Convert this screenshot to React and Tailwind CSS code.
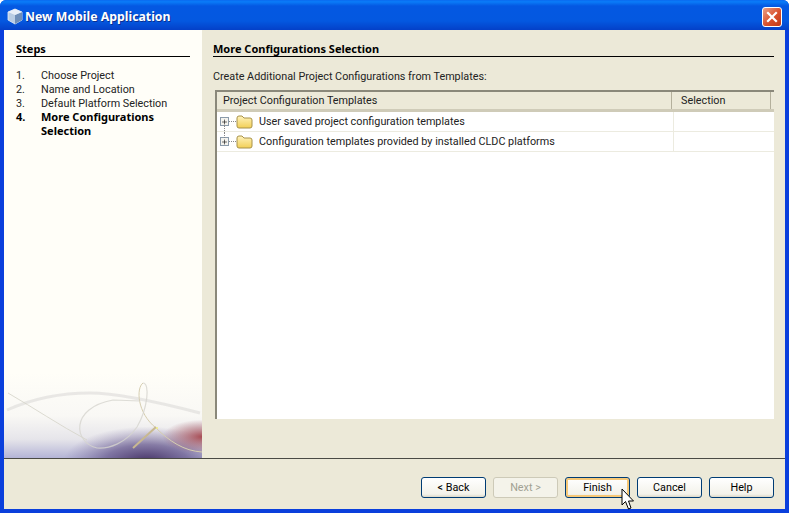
import { Plus } from "lucide-react";

const FONT = "font-['Roboto','Noto_Sans',sans-serif]";
const BOLD = "font-['Noto_Sans',sans-serif] text-[11px] font-bold text-black";

const steps = [
  { n: "1.", label: "Choose Project" },
  { n: "2.", label: "Name and Location" },
  { n: "3.", label: "Default Platform Selection" },
  { n: "4.", label: "More Configurations Selection", active: true },
];

const rows = [
  "User saved project configuration templates",
  "Configuration templates provided by installed CLDC platforms",
];

function CubeIcon() {
  return (
    <svg width="16" height="17" viewBox="0 0 16 17">
      <path d="M8 1 L15 4 V12 L8 16 L1 12 V4 Z" fill="#b9cde4" stroke="#e6eef8" strokeWidth="0.8" />
      <path d="M8 7 L15 4 V12 L8 16 Z" fill="#6f8fb8" />
      <path d="M8 7 L1 4 L8 1 L15 4 Z" fill="#e8eff8" />
    </svg>
  );
}

function CloseButton() {
  return (
    <div className="flex h-[20px] w-[20px] items-center justify-center rounded-[3px] border border-white bg-[linear-gradient(135deg,#e9a088,#d9502c_55%,#c03a18)]">
      <svg width="12" height="12" viewBox="0 0 12 12">
        <path d="M2 2 L10 10 M10 2 L2 10" stroke="white" strokeWidth="2.2" strokeLinecap="square" />
      </svg>
    </div>
  );
}

function Folder() {
  return (
    <svg width="17" height="14" viewBox="0 0 17 14">
      <defs>
        <linearGradient id="folder" x1="0" y1="0" x2="0" y2="1">
          <stop offset="0" stopColor="#fff3bd" />
          <stop offset="1" stopColor="#f2cf55" />
        </linearGradient>
      </defs>
      <path d="M1 3 Q1 1 3 1 H6 L8 3 H14 Q16 3 16 5 V11 Q16 13 14 13 H3 Q1 13 1 11 Z" fill="url(#folder)" stroke="#a8924a" />
    </svg>
  );
}

function TreeRow({ label, first, last }) {
  return (
    <div className="flex h-[20px] border-b border-[#ecebe0]">
      <div className="relative flex w-[457px] items-center border-r border-[#ecebe0]">
        {!first && <span className="absolute left-[7px] top-0 h-[6px] border-l border-dotted border-[#888]" />}
        {!last && <span className="absolute bottom-0 left-[7px] h-[6px] border-l border-dotted border-[#888]" />}
        <span className="ml-[3px] flex h-[9px] w-[9px] items-center justify-center border border-[#8a9aaa] bg-[#f4f3ee]">
          <Plus size={8} strokeWidth={2} className="text-black" />
        </span>
        <span className="w-[7px] border-t border-dotted border-[#888]" />
        <Folder />
        <span className="ml-[6px] text-[#222]">{label}</span>
      </div>
    </div>
  );
}

function WizardButton({ children, disabled, focused, className }) {
  return (
    <button
      disabled={disabled}
      className={`flex h-[21px] items-center justify-center rounded-[3px] border ${
        disabled
          ? "border-[#cdcab8] bg-[#f4f3ea] text-[#a1a192]"
          : "border-[#003c74] bg-[linear-gradient(#ffffff,#f3f2ea_85%,#dcd8c8)] text-black"
      } ${focused ? "shadow-[inset_0_0_0_2px_#f6c877]" : ""} ${className}`}
    >
      {children}
    </button>
  );
}

function Cursor() {
  return (
    <svg className="absolute left-[621px] top-[488px]" width="15" height="23" viewBox="0 0 15 23">
      <path d="M1 1 V17 L4.5 13.5 L7.5 21 L10 20 L7.5 13 H12.5 Z" fill="white" stroke="black" strokeWidth="1" />
    </svg>
  );
}

function Swoosh() {
  return (
    <svg className="absolute bottom-0 left-0" width="198" height="85" viewBox="0 0 198 85">
      <defs>
        <linearGradient id="fade" x1="0" y1="0" x2="0" y2="1">
          <stop offset="0" stopColor="#fffef8" />
          <stop offset="0.5" stopColor="#f9f8f5" />
          <stop offset="0.78" stopColor="#e6e5ea" />
          <stop offset="1" stopColor="#b4b4d6" />
        </linearGradient>
        <radialGradient id="dark" cx="0.72" cy="1.05" r="0.42">
          <stop offset="0" stopColor="#3f2a5c" stopOpacity="0.95" />
          <stop offset="0.5" stopColor="#5c4c84" stopOpacity="0.65" />
          <stop offset="1" stopColor="#7c70a4" stopOpacity="0" />
        </radialGradient>
        <radialGradient id="red" cx="1" cy="0.75" r="0.2">
          <stop offset="0" stopColor="#a84c54" />
          <stop offset="0.55" stopColor="#a8606c" stopOpacity="0.5" />
          <stop offset="1" stopColor="#a06070" stopOpacity="0" />
        </radialGradient>
      </defs>
      <rect width="198" height="85" fill="url(#fade)" />
      <rect width="198" height="85" fill="url(#dark)" />
      <rect width="198" height="85" fill="url(#red)" />
      <path d="M3 37 C30 25 60 20 86 20 C110 20 150 28 196 40" fill="none" stroke="#dcdbd8" strokeWidth="3" opacity="0.6" />
      <path d="M4 20 C30 35 55 52 83 67" fill="none" stroke="#d4d3c8" strokeWidth="0.8" />
      <path d="M139 10 C132 15 133 40 152 55 C165 68 180 78 198 79" fill="none" stroke="#d6ceb0" strokeWidth="1" />
      <path d="M139 10 C146 10 144 35 133 54 C122 70 105 76 93 75 C70 70 65 35 109 27 L136 28" fill="none" stroke="#d6d4ce" strokeWidth="1.2" opacity="0.8" />
      <path d="M152 54 L129 75" stroke="#c8b890" strokeWidth="2" />
      <circle cx="153" cy="55" r="1" fill="#f0f080" />
    </svg>
  );
}

export default function App() {
  return (
    <div className={`relative flex h-[513px] w-[789px] flex-col overflow-hidden rounded-t-[6px] bg-[#0a3fdc] text-[10.8px] leading-[14px] text-[#222] ${FONT}`}>
      <header className="flex h-[30px] items-center justify-between bg-[linear-gradient(#0a6af0,#0a7cf8_6%,#0458e2_20%,#0458e0_70%,#0440c8)] pl-[7px] pr-[7px] pt-[3px]">
        <div className="flex items-center gap-[2px]">
          <CubeIcon />
          <span className="font-['Noto_Sans',sans-serif] text-[12.3px] font-bold text-white [text-shadow:1px_1px_0_#0a2f90]">New Mobile Application</span>
        </div>
        <CloseButton />
      </header>

      <div className="mx-[4px] mb-[4px] flex flex-1 flex-col bg-[#ece9d8]">
        <div className="flex h-[428px]">
          <aside className="relative w-[198px] bg-[#fffef8] px-[12px] pt-[12px]">
            <h2 className={`border-b border-black ${BOLD}`}>Steps</h2>
            <ol className="mt-[12px]">
              {steps.map((s) => (
                <li key={s.n} className={`flex ${s.active ? `-mt-[1px] ${BOLD}` : ""}`}>
                  <span className="w-[25px] shrink-0">{s.n}</span>
                  <span>{s.label}</span>
                </li>
              ))}
            </ol>
            <Swoosh />
          </aside>

          <main className="flex flex-1 flex-col px-[11px] pt-[12px]">
            <h2 className={`border-b border-black ${BOLD}`}>More Configurations Selection</h2>
            <p className="mt-[13px]">Create Additional Project Configurations from Templates:</p>
            <div className="ml-[2px] mt-[6px] h-[329px] w-[559px] border-l-2 border-t-2 border-[#8a887a] bg-white">
              <div className="flex h-[20px] border-b-[3px] border-[#cfcbb8] bg-[#ece9d8]">
                <div className="w-[455px] border-r border-[#b4b09c] pl-[6px] pt-[2px]">Project Configuration Templates</div>
                <div className="w-[99px] border-r border-[#b4b09c] pl-[9px] pt-[2px]">Selection</div>
              </div>
              <TreeRow label={rows[0]} first />
              <TreeRow label={rows[1]} last />
            </div>
          </main>
        </div>

        <footer className="flex flex-1 items-start justify-end gap-[7px] border-t border-[#4a4a44] pr-[11px] pt-[18px]">
          <WizardButton className="w-[65px]">&lt; Back</WizardButton>
          <WizardButton disabled className="w-[65px]">Next &gt;</WizardButton>
          <WizardButton focused className="w-[65px]">Finish</WizardButton>
          <WizardButton className="w-[65px]">Cancel</WizardButton>
          <WizardButton className="w-[65px]">Help</WizardButton>
        </footer>
      </div>

      <Cursor />
    </div>
  );
}
